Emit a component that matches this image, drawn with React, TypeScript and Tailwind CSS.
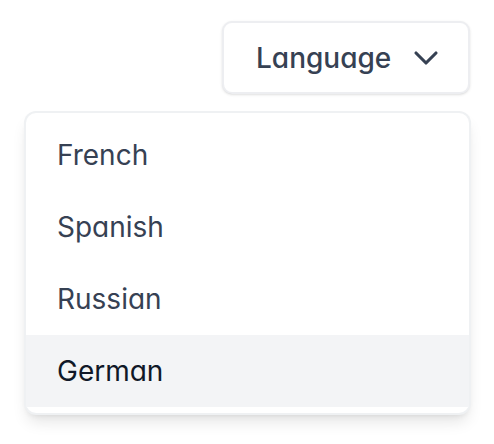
import React from "react";
import { ChevronDown } from "lucide-react";

const languages = ["French", "Spanish", "Russian", "German"];

const App = () => {
  const active = "German";

  return (
    <div className="min-h-screen w-full bg-white px-6 pt-[21px] font-['Inter',sans-serif] [font-feature-settings:'cv11']">
      <div className="flex justify-end">
        <button className="flex h-[73px] w-[248px] items-center rounded-[10px] border-2 border-gray-200/70 bg-white pl-[32px] pr-[22px] text-[28px] font-medium text-gray-700 shadow-sm">
          <span>Language</span>
          <ChevronDown className="ml-auto h-[40px] w-[40px] text-gray-700" strokeWidth={1.9} />
        </button>
      </div>

      <div className="mt-[17px] w-[447px] rounded-[12px] border-2 border-gray-200/60 bg-white py-[6px] shadow-lg">
        {languages.map((lang) => (
          <div
            key={lang}
            className={
              lang === active
                ? "flex h-[72px] items-center bg-gray-100 px-[31px] text-[28px] text-gray-900"
                : "flex h-[72px] items-center px-[31px] text-[28px] text-gray-700"
            }
          >
            {lang}
          </div>
        ))}
      </div>
    </div>
  );
};

export default App;
